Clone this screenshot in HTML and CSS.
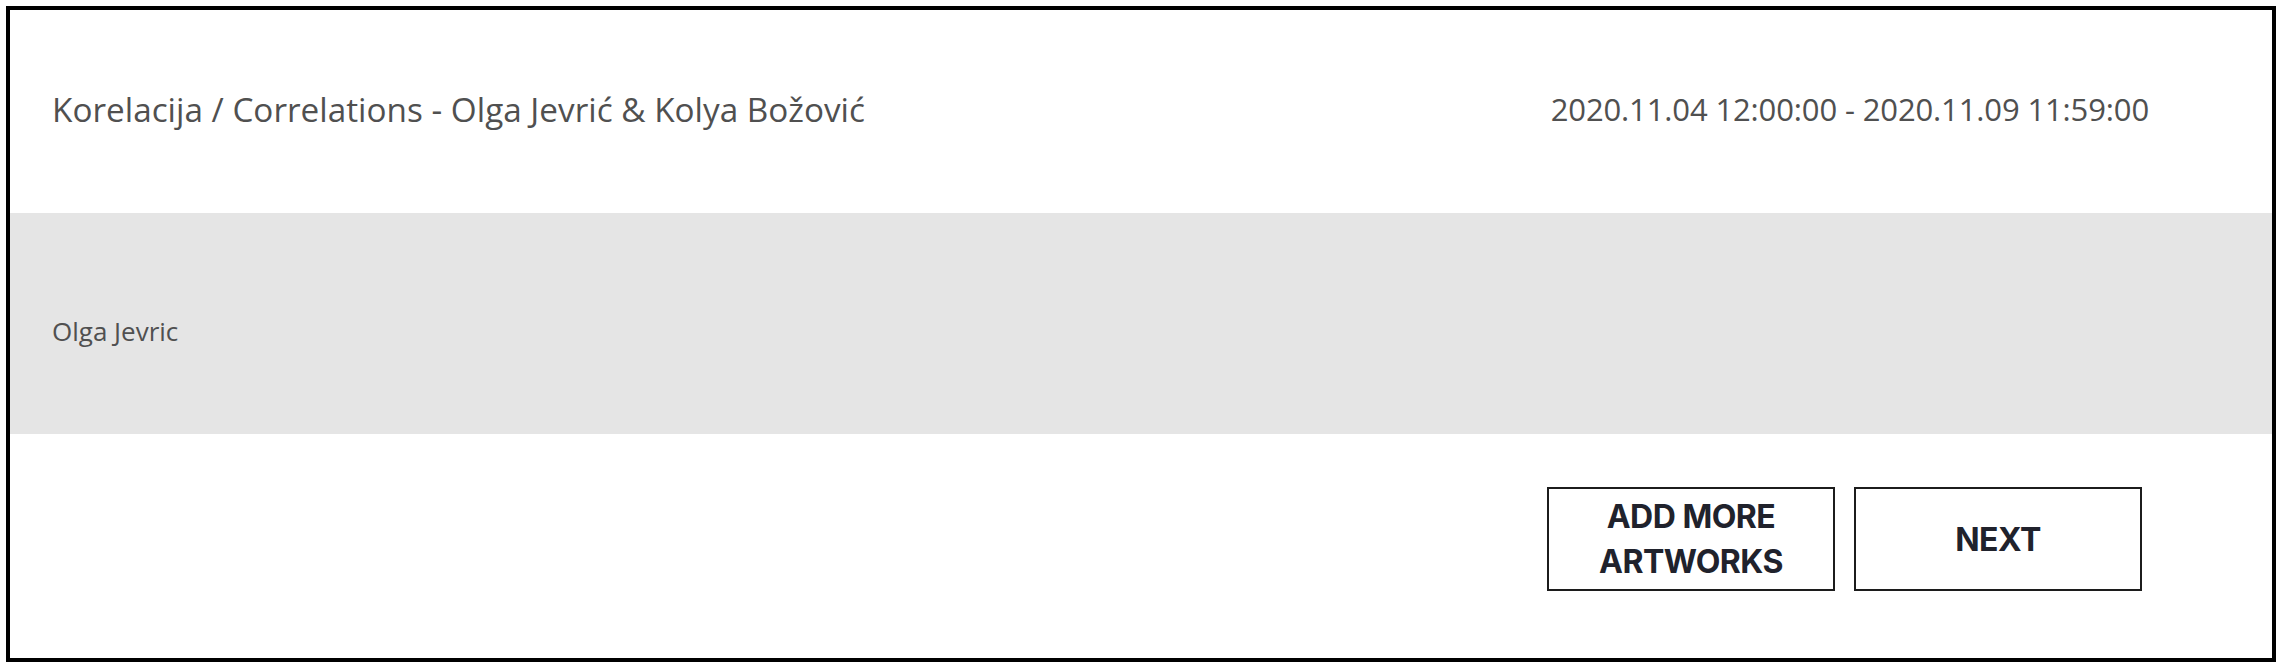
FILE: index.html
```html
<!DOCTYPE html>
<html lang="sr">
<head>
<meta charset="utf-8">
<title>Correlations</title>
<link rel="stylesheet" href="styles.css">
</head>
<body>
<div class="frame">
  <div class="header">
    <div class="title">Korelacija / Correlations - Olga Jevrić &amp; Kolya Božović</div>
    <div class="dates">2020.11.04 12:00:00 - 2020.11.09 11:59:00</div>
  </div>
  <div class="artist">
    <div class="artist-name">Olga Jevric</div>
  </div>
  <div class="actions">
    <button class="btn">ADD MORE<br>ARTWORKS</button>
    <button class="btn">NEXT</button>
  </div>
</div>
</body>
</html>
```

FILE: styles.css
```css
html, body {
  margin: 0;
  padding: 0;
  background: #ffffff;
}

.frame {
  margin: 6px 6px 0 6px;
  border: 4px solid #000000;
  height: 648px;
  display: flex;
  flex-direction: column;
  background: #ffffff;
}

.header {
  height: 203px;
  box-sizing: border-box;
  padding: 0 123px 5px 42px;
  display: flex;
  align-items: center;
  justify-content: space-between;
  font-family: "Open Sans", "Noto Sans", sans-serif;
  color: #505050;
}

.title {
  font-size: 33.3px;
  letter-spacing: 0;
}

.dates {
  font-size: 31px;
  letter-spacing: -0.13px;
}

.artist {
  height: 221px;
  box-sizing: border-box;
  padding: 14px 42px 0 42px;
  background: #e5e5e5;
  display: flex;
  align-items: center;
}

.artist-name {
  font-family: "Open Sans", "Noto Sans", sans-serif;
  font-size: 26px;
  color: #505050;
}

.actions {
  flex: 1;
  display: flex;
  justify-content: flex-end;
  align-items: flex-start;
  gap: 19px;
  padding: 53px 130px 0 0;
}

.btn {
  width: 288px;
  height: 104px;
  box-sizing: border-box;
  border: 2px solid #1c1c1c;
  background: #ffffff;
  font-family: Inter, "Liberation Sans", sans-serif;
  font-weight: 700;
  font-size: 32px;
  line-height: 45px;
  letter-spacing: -0.5px;
  color: #20222c;
  text-align: center;
  padding: 0;
}
```
